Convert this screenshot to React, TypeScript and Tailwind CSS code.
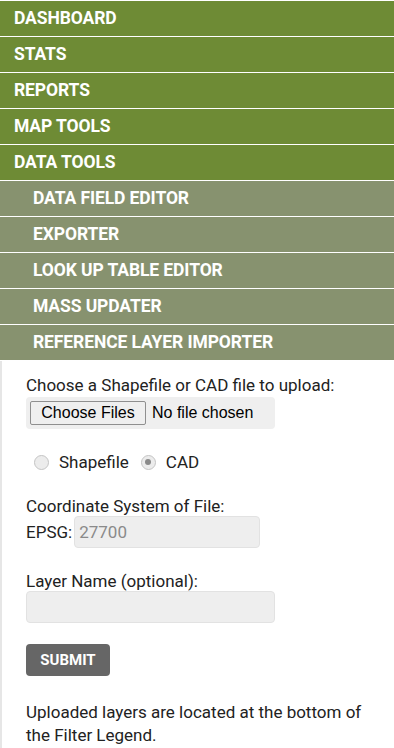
import { useState } from "react";

const mainItems = ["DASHBOARD", "STATS", "REPORTS", "MAP TOOLS", "DATA TOOLS"];
const subItems = [
  "DATA FIELD EDITOR",
  "EXPORTER",
  "LOOK UP TABLE EDITOR",
  "MASS UPDATER",
  "REFERENCE LAYER IMPORTER",
];

function Radio({ checked, label, onClick }: { checked: boolean; label: string; onClick: () => void }) {
  return (
    <label onClick={onClick} className="flex items-center gap-[10px] cursor-pointer">
      <span className="w-[15px] h-[15px] rounded-full border border-[#c4c4c4] bg-[#ececec] flex items-center justify-center">
        {checked && <span className="w-[6px] h-[6px] rounded-full bg-[#8a8a8a]" />}
      </span>
      <span>{label}</span>
    </label>
  );
}

export default function App() {
  const [fileType, setFileType] = useState<"shp" | "cad">("cad");

  return (
    <div className="w-[394px] min-h-[748px] bg-white font-['Roboto',sans-serif] text-[#222]">
      {/* Menu */}
      <nav className="pt-px">
        {mainItems.map((item) => (
          <div
            key={item}
            className="h-[36px] border-b border-white bg-[#6e8b35] text-white font-bold text-[17.5px] tracking-[-0.1px] pl-[14px] flex items-center"
          >
            {item}
          </div>
        ))}
        {subItems.map((item) => (
          <div
            key={item}
            className="h-[36px] border-b border-white bg-[#87926f] text-white font-bold text-[17.5px] tracking-[-0.1px] pl-[33px] flex items-center"
          >
            {item}
          </div>
        ))}
      </nav>

      {/* Importer form */}
      <div className="border-l-2 border-[#e6e6e6] pl-[24px] pt-[12px] pb-[6px] text-[17px] leading-[24px]">
        <p>Choose a Shapefile or CAD file to upload:</p>
        <div className="w-[249px] h-[32px] bg-[#efefef] rounded-[4px] flex items-center pl-[4px] gap-[6px] font-['Liberation_Sans',sans-serif] text-[16px]">
          <span className="w-[116px] h-[24px] flex items-center justify-center border border-[#8f8f8f] rounded-[2px] bg-[#efefef] text-black">
            Choose Files
          </span>
          <span className="text-black">No file chosen</span>
        </div>

        <div className="flex items-center gap-[12px] mt-[21px] pl-[8px]">
          <Radio checked={fileType === "shp"} label="Shapefile" onClick={() => setFileType("shp")} />
          <Radio checked={fileType === "cad"} label="CAD" onClick={() => setFileType("cad")} />
        </div>

        <p className="mt-[20px]">Coordinate System of File:</p>
        <div className="flex items-center -mt-[2px] h-[32px]">
          <span>EPSG:</span>
          <input
            type="text"
            defaultValue="27700"
            className="ml-[2px] w-[186px] h-[32px] bg-[#eeeeee] border border-[#e2e2e2] rounded-[4px] px-[4px] text-[#8a8a8a] outline-none"
          />
        </div>

        <p className="mt-[21px]">Layer Name (optional):</p>
        <input
          type="text"
          className="block -mt-[2px] w-[249px] h-[32px] bg-[#eeeeee] border border-[#e2e2e2] rounded-[4px] px-[4px] outline-none"
        />

        <button className="block mt-[21px] w-[84px] h-[32px] bg-[#666666] rounded-[4px] text-white font-bold text-[15px]">
          SUBMIT
        </button>

        <p className="mt-[25px] leading-[23px] pr-[10px]">
          Uploaded layers are located at the bottom of the Filter Legend.
        </p>
      </div>
    </div>
  );
}
